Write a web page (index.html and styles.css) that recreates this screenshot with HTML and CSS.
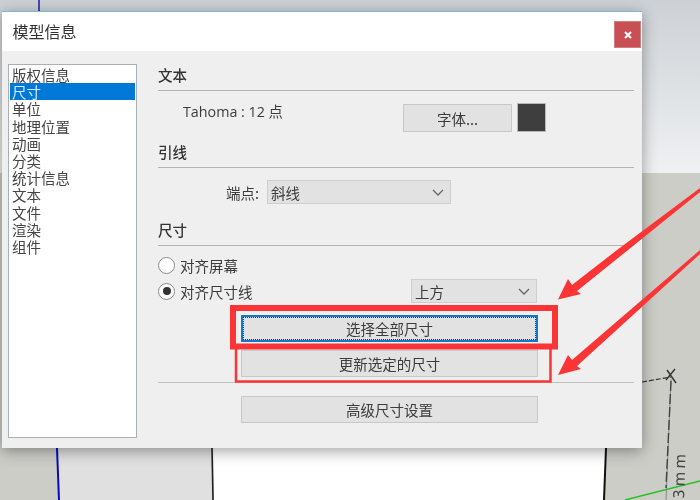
FILE: index.html
```html
<!DOCTYPE html>
<html lang="zh">
<head>
<meta charset="utf-8">
<title>模型信息</title>
<link rel="stylesheet" href="styles.css">
</head>
<body>
<div class="stage">
  <svg class="scene" width="700" height="500" viewBox="0 0 700 500">
    <defs>
      <linearGradient id="sky" x1="0" y1="0" x2="0" y2="1">
        <stop offset="0" stop-color="#cdd1d5"/>
        <stop offset="1" stop-color="#eff1f3"/>
      </linearGradient>
    </defs>
    <rect width="700" height="173" fill="url(#sky)"/>
    <rect y="173" width="700" height="327" fill="#cdcdc8"/>
    <path d="M57 440H213V500H59Z" fill="#e0e0e0"/>
    <path d="M213 440H606L604 500H214Z" fill="#fff"/>
    <path d="M39 0V12" stroke="#1a1aa8" stroke-width="1.5"/>
    <path d="M57 448L59 500" stroke="#0a0ac0" stroke-width="2"/>
    <path d="M212 448L213 500" stroke="#222" stroke-width="1.6"/>
    <path d="M606 448L604 500" stroke="#111" stroke-width="2"/>
    <path d="M625 500L700 481" stroke="#1fc41f" stroke-width="1.4"/>
    <path d="M642 382L671 377" stroke="#333" stroke-width="1.2" stroke-dasharray="5 2"/>
    <path d="M671 379L666 500" stroke="#888" stroke-width="1"/>
    <path d="M671 381L666 488" stroke="#444" stroke-width="1.4" stroke-dasharray="10 3"/>
    <path d="M667 370L676 383M675 369L666 380" stroke="#333" stroke-width="1.4"/>
    <text class="dim-label" transform="translate(684 499) rotate(-88)">3mm</text>
  </svg>

  <section class="dialog">
    <header class="titlebar">
      <h1 class="title">模型信息</h1>
      <button class="close" type="button" aria-label="关闭">
        <svg width="8" height="8" viewBox="0 0 8 8"><path d="M1 1L7 7M7 1L1 7" stroke="#fff" stroke-width="2"/></svg>
      </button>
    </header>
    <div class="content">
      <ul class="nav">
        <li>版权信息</li>
        <li class="selected">尺寸</li>
        <li>单位</li>
        <li>地理位置</li>
        <li>动画</li>
        <li>分类</li>
        <li>统计信息</li>
        <li>文本</li>
        <li>文件</li>
        <li>渲染</li>
        <li>组件</li>
      </ul>
      <div class="panel">
        <h2 class="heading">文本</h2>
        <div class="font-row">
          <span class="font-name">Tahoma : 12 点</span>
          <button class="btn font-btn" type="button">字体...</button>
          <span class="swatch"></span>
        </div>

        <h2 class="heading heading-leader">引线</h2>
        <div class="endpoint-row">
          <span class="endpoint-label">端点:</span>
          <div class="select select-endpoint">
            <span>斜线</span>
            <svg class="chev" width="12" height="7" viewBox="0 0 12 7"><path d="M1 1L6 6L11 1" fill="none" stroke="#666" stroke-width="1.3"/></svg>
          </div>
        </div>

        <h2 class="heading heading-dim">尺寸</h2>
        <div class="radio-row">
          <span class="radio"></span>
          <span>对齐屏幕</span>
        </div>
        <div class="radio-row radio-row-2">
          <span class="radio radio-on"></span>
          <span>对齐尺寸线</span>
          <div class="select select-pos">
            <span>上方</span>
            <svg class="chev" width="12" height="7" viewBox="0 0 12 7"><path d="M1 1L6 6L11 1" fill="none" stroke="#666" stroke-width="1.3"/></svg>
          </div>
        </div>
        <div class="actions">
          <button class="btn wide focused" type="button">选择全部尺寸</button>
          <button class="btn wide" type="button">更新选定的尺寸</button>
        </div>
        <hr class="rule">
        <div class="actions actions-last">
          <button class="btn wide" type="button">高级尺寸设置</button>
        </div>
      </div>
    </div>
  </section>

  <svg class="marks" width="700" height="500" viewBox="0 0 700 500">
    <rect x="233" y="308" width="322" height="38.500" fill="none" stroke="#fb3535" stroke-width="6"/>
    <path d="M236 349V381.500H550.500V349" fill="none" stroke="#fb3535" stroke-width="2.500"/>
    <path d="M700 188L617 250L572 285L568 279L558 299.500L581 294L577 291L628 250L700 192Z" fill="#fb3535"/>
    <path d="M700 250L572 360L568 355L558 375L581 369L577 366L700 254Z" fill="#fb3535"/>
  </svg>
</div>
</body>
</html>
```
FILE: styles.css
```css
* { box-sizing: border-box; }
html, body { margin: 0; padding: 0; }
body {
  width: 700px;
  height: 500px;
  overflow: hidden;
  background: #cdcdc8;
  font-family: "Noto Sans CJK SC", "Noto Sans", sans-serif;
  font-size: 14.500px;
  color: #3c3c3c;
}
.stage {
  position: relative;
  width: 700px;
  height: 500px;
  overflow: hidden;
  filter: blur(0.35px);
}
.scene, .marks {
  position: absolute;
  left: 0;
  top: 0;
  display: block;
}
.marks { pointer-events: none; }
.dim-label {
  font-family: "DejaVu Sans", sans-serif;
  font-size: 15px;
  letter-spacing: 3px;
  fill: #444;
}

.dialog {
  position: absolute;
  left: 2px;
  top: 11px;
  width: 640px;
  height: 437px;
  display: flex;
  flex-direction: column;
  background: #efefef;
  border-top: 1px solid #72bfd2;
  box-shadow: 0 3px 14px rgba(0, 0, 0, 0.38);
}
.titlebar {
  height: 39px;
  flex: none;
  display: flex;
  align-items: flex-start;
  justify-content: space-between;
  background: #fff;
  padding-left: 10.500px;
}
.title {
  margin: 9px 0 0;
  font-size: 16px;
  line-height: 20px;
  font-weight: 400;
  color: #333;
}
.close {
  width: 27px;
  height: 27px;
  margin: 9px 1px 0 0;
  padding: 0;
  border: 1px solid #d27c7e;
  background: #c85054;
  display: flex;
  align-items: center;
  justify-content: center;
}

.content {
  flex: 1;
  display: flex;
  min-height: 0;
}
.nav {
  list-style: none;
  width: 129px;
  height: 374px;
  margin: 13px 0 0 6px;
  padding: 1px;
  flex: none;
  background: #fff;
  border: 1px solid #aab0b8;
  font-size: 14.500px;
  line-height: 17.200px;
  color: #444;
}
.nav li {
  height: 17.200px;
  padding-left: 2px;
  white-space: nowrap;
}
.nav .selected {
  background: #0078d7;
  color: #d8ecfb;
}

.panel {
  width: 476px;
  margin-left: 21px;
  padding-top: 13px;
  flex: none;
}
.heading {
  height: 27px;
  margin: 0;
  border-bottom: 1px solid #b4b4b4;
  font-size: 14.500px;
  line-height: 22px;
  font-weight: 500;
  color: #333;
}
.heading-leader { margin-top: 9px; }
.heading-dim { margin-top: 15px; }

.font-row {
  display: flex;
  align-items: flex-start;
  height: 29px;
  margin-top: 12px;
}
.font-name {
  width: 220px;
  margin-left: 25px;
  line-height: 17px;
  font-family: "Open Sans", "Noto Sans CJK SC", sans-serif;
  font-size: 14.300px;
}
.btn {
  display: block;
  padding: 0;
  font: inherit;
  color: #3c3c3c;
  background: #e2e2e2;
  border: 1px solid #c8c8c8;
  border-radius: 0;
}
.font-btn {
  width: 109px;
  height: 28px;
  margin-top: 1px;
}
.swatch {
  width: 29px;
  height: 29px;
  margin-left: 5px;
  background: #3e3e3e;
  border: 1px solid #b8b8b8;
}

.endpoint-row {
  display: flex;
  align-items: center;
  height: 24px;
  margin-top: 12px;
}
.endpoint-label {
  width: 41px;
  margin-left: 68px;
  white-space: nowrap;
}
.select {
  display: flex;
  align-items: center;
  justify-content: space-between;
  height: 24px;
  padding: 0 6px 0 3px;
  background: #e2e2e2;
  border: 1px solid #cfcfcf;
}
.select-endpoint { width: 184px; }
.select-pos {
  width: 126px;
  margin-left: auto;
  margin-right: 97px;
}
.chev { flex: none; }

.radio-row {
  display: flex;
  align-items: center;
  gap: 5px;
  height: 21px;
  margin-top: 9px;
}
.radio-row-2 {
  height: 24px;
  margin-top: 3px;
}
.radio {
  width: 17px;
  height: 17px;
  flex: none;
  border: 1.500px solid #8a8a8a;
  border-radius: 50%;
  background: #fff;
  display: flex;
  align-items: center;
  justify-content: center;
}
.radio-on::after {
  content: "";
  width: 8px;
  height: 8px;
  border-radius: 50%;
  background: #333;
}

.actions {
  display: flex;
  flex-direction: column;
  gap: 8px;
  margin: 12px 0 0 83px;
}
.actions-last { margin-top: 13px; }
.wide {
  width: 297px;
  height: 27px;
}
.focused {
  border: 2px solid #0f78d0;
  outline: 1px dotted #333;
  outline-offset: -3px;
}
.rule {
  height: 1px;
  margin: 5px 0 0;
  border: 0;
  background: #c0c0c0;
}
```
